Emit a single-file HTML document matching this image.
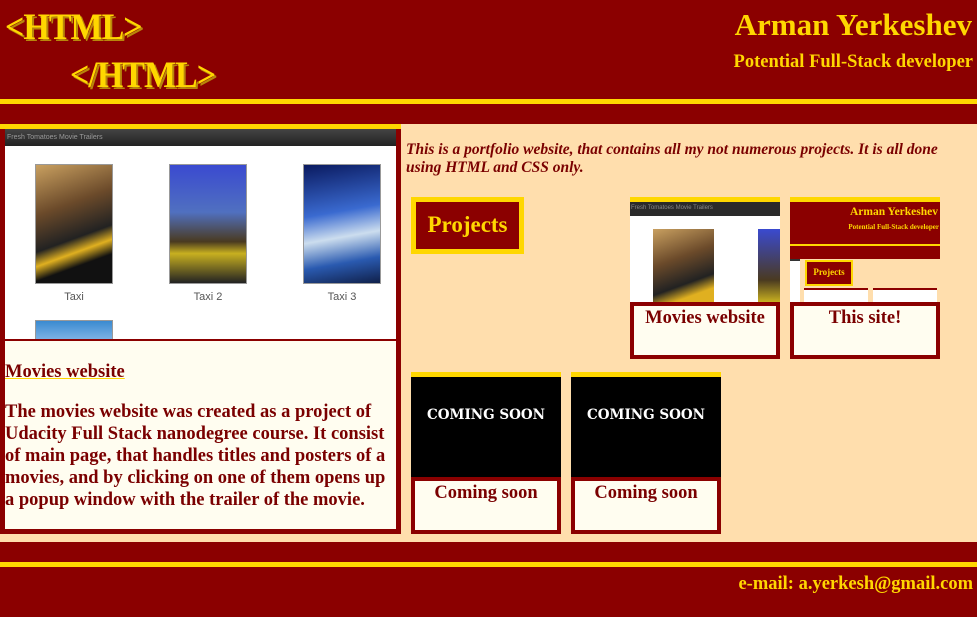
<!DOCTYPE html>
<html><head><meta charset="utf-8"><style>
*{margin:0;padding:0;box-sizing:border-box}
body{width:977px;height:617px;overflow:hidden;background:#ffdead;font-family:"Liberation Serif",serif;position:relative}
.a{position:absolute}
.red{background:#8b0000}
.yel{background:#ffd700}
.y{color:#ffd700}
.post{position:absolute;border:1px solid #999}
.cap{position:absolute;font-family:"Liberation Sans",sans-serif;font-size:11px;color:#555;text-align:center;width:80px}
.card{position:absolute;width:150px;height:162px}
.card .top{height:5px;background:#ffd700}
.card .img{height:100px;background:#fff;overflow:hidden;position:relative}
.card .box{height:57px;border:4px solid #8b0000;background:#fffdf0;color:#7a0000;font-weight:bold;font-size:18.5px;text-align:center;line-height:20px;padding-top:2px}
.card .img.cs{background:#000;color:#fff;font-family:"DejaVu Serif","Liberation Serif",serif;font-weight:bold;font-size:13.5px;text-align:center;padding-top:30px}
</style></head><body>
<div class="a red" style="left:0;top:0;width:977px;height:124px"></div>
<div class="a yel" style="left:0;top:99px;width:977px;height:5px"></div>
<div class="a y" style="left:5px;top:7px;font-size:34px;font-weight:bold;text-shadow:2px 2px 0 #b8860b;letter-spacing:-1px;transform:scaleY(1.1);transform-origin:top left">&lt;HTML&gt;</div>
<div class="a y" style="left:70px;top:55px;font-size:34px;font-weight:bold;text-shadow:2px 2px 0 #b8860b;letter-spacing:-1px;transform:scaleY(1.1);transform-origin:top left">&lt;/HTML&gt;</div>
<div class="a y" style="right:5px;top:7px;font-size:31px;font-weight:bold">Arman Yerkeshev</div>
<div class="a y" style="right:4px;top:52px;font-size:18.5px;font-weight:bold">Potential Full-Stack developer</div>

<div class="a red" style="left:0;top:124px;width:401px;height:410px"></div>
<div class="a yel" style="left:0;top:124px;width:401px;height:5px"></div>
<div class="a" style="left:5px;top:129px;width:391px;height:210px;background:#fff;overflow:hidden">
  <div style="height:17px;background:linear-gradient(#444,#222);color:#999;font-family:'Liberation Sans',sans-serif;font-size:7px;padding:5px 2px">Fresh Tomatoes Movie Trailers</div>
  <div class="post" style="left:30px;top:35px;width:78px;height:120px;background:linear-gradient(160deg,#c9a060 0%,#6b4a2a 35%,#222 60%,#e0b020 70%,#111 80%)"></div>
  <div class="post" style="left:164px;top:35px;width:78px;height:120px;background:linear-gradient(180deg,#3a4ad0 0%,#5070c0 40%,#4a3a20 65%,#c8b020 75%,#222 100%)"></div>
  <div class="post" style="left:298px;top:35px;width:78px;height:120px;background:linear-gradient(170deg,#0a1a60 0%,#3a6ad0 40%,#cde 60%,#2a5ab0 80%,#10204a 100%)"></div>
  <div class="cap" style="left:29px;top:162px">Taxi</div>
  <div class="cap" style="left:163px;top:162px">Taxi 2</div>
  <div class="cap" style="left:297px;top:162px">Taxi 3</div>
  <div class="post" style="left:30px;top:191px;width:78px;height:30px;background:linear-gradient(#3a8ad0,#a0c8f0)"></div>
</div>
<div class="a" style="left:5px;top:341px;width:391px;height:188px;background:#fffdf0;color:#7a0000;font-weight:bold">
  <div style="position:absolute;left:0;top:21px;font-size:18.5px;text-decoration:underline;text-decoration-color:#ffd700">Movies website</div>
  <div style="position:absolute;left:0;top:60px;width:391px;font-size:18.5px;line-height:22px">The movies website was created as a project of Udacity Full Stack nanodegree course. It consist of main page, that handles titles and posters of a movies, and by clicking on one of them opens up a popup window with the trailer of the movie.</div>
</div>

<div class="a" style="left:406px;top:141px;width:570px;color:#7a0000;font-style:italic;font-weight:bold;font-size:15.5px;line-height:18px">This is a portfolio website, that contains all my not numerous projects. It is all done using HTML and CSS only.</div>
<div class="a red y" style="left:411px;top:197px;width:113px;height:57px;border:5px solid #ffd700;font-size:23px;font-weight:bold;text-align:center;line-height:46px">Projects</div>

<div class="card" style="left:630px;top:197px"><div class="top"></div><div class="img">
  <div style="height:14px;background:#2a2a2a;color:#888;font-size:6px;font-family:'Liberation Sans',sans-serif;padding:3px 1px">Fresh Tomatoes Movie Trailers</div>
  <div style="position:absolute;left:23px;top:27px;width:61px;height:73px;background:linear-gradient(160deg,#c9a060 0%,#6b4a2a 40%,#222 70%,#e0b020 85%)"></div>
  <div style="position:absolute;left:128px;top:27px;width:30px;height:73px;background:linear-gradient(#3a4ad0,#4a3a20 70%,#c8b020)"></div>
</div><div class="box">Movies website</div></div>

<div class="card" style="left:790px;top:197px"><div class="top"></div><div class="img" style="background:#ffdead">
  <div style="position:absolute;left:0;top:0;width:150px;height:57px;background:#8b0000"></div>
  <div style="position:absolute;left:0;top:42px;width:150px;height:2px;background:#ffd700"></div>
  <div style="position:absolute;right:2px;top:4px;color:#ffd700;font-weight:bold;font-size:11.5px">Arman Yerkeshev</div>
  <div style="position:absolute;right:1px;top:21px;color:#ffd700;font-weight:bold;font-size:7px">Potential Full-Stack developer</div>
  <div style="position:absolute;left:0;top:57px;width:10px;height:43px;background:#fff;border-top:2px solid #333"></div>
  <div style="position:absolute;left:15px;top:58px;width:48px;height:26px;background:#8b0000;border:2px solid #ffd700;color:#ffd700;font-weight:bold;font-size:9px;text-align:center;line-height:21px">Projects</div>
  <div style="position:absolute;left:14px;top:86px;width:64px;height:14px;background:#fff;border-top:2px solid #8b0000"></div>
  <div style="position:absolute;left:83px;top:86px;width:64px;height:14px;background:#fff;border-top:2px solid #8b0000"></div>
</div><div class="box">This site!</div></div>

<div class="card" style="left:411px;top:372px"><div class="top"></div><div class="img cs">COMING SOON</div><div class="box">Coming soon</div></div>
<div class="card" style="left:571px;top:372px"><div class="top"></div><div class="img cs">COMING SOON</div><div class="box">Coming soon</div></div>

<div class="a red" style="left:0;top:542px;width:977px;height:75px"></div>
<div class="a yel" style="left:0;top:562px;width:977px;height:5px"></div>
<div class="a y" style="right:4px;top:574px;font-size:18.5px;font-weight:bold">e-mail: a.yerkesh@gmail.com</div>
</body></html>
